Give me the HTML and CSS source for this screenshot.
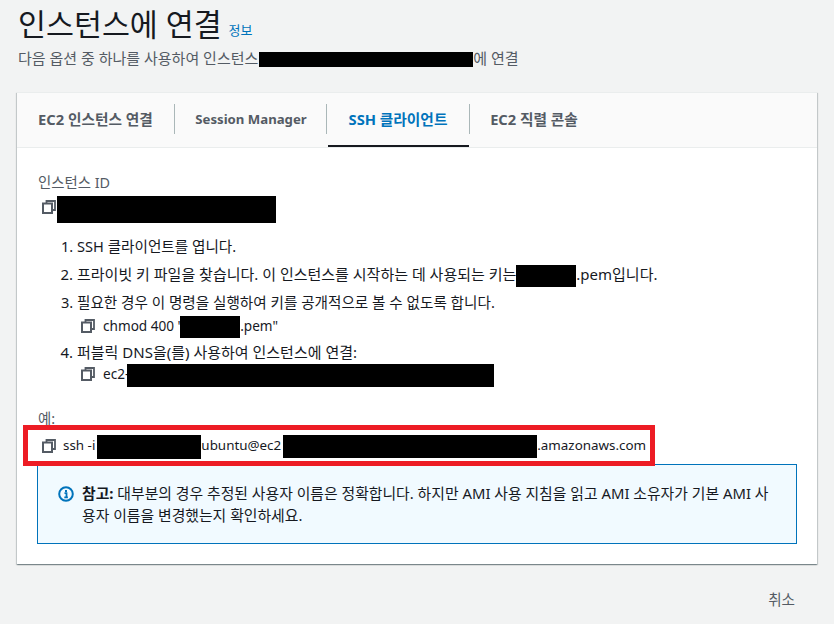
FILE: index.html
```html
<!DOCTYPE html>
<html lang="ko">

<head>
    <meta charset="utf-8">
    <title>인스턴스에 연결</title>
    <link rel="stylesheet" href="styles.css">
</head>

<body>
    <svg class="defs" width="0" height="0">
        <symbol id="copy" viewBox="0 0 14 14">
            <path d="M4.500 3.500V1h8.500v9H10" fill="none" stroke="#545b64" stroke-width="1.800"/>
            <rect x="1" y="3.500" width="9" height="9.500" fill="none" stroke="#545b64" stroke-width="2"/>
        </symbol>
    </svg>

    <header class="top">
        <h1>인스턴스에 연결 <a class="info" href="#">정보</a></h1>
        <p class="sub">다음 옵션 중 하나를 사용하여 인스턴스<span class="red r-sub"></span>에 연결</p>
    </header>

    <section class="card">
        <nav class="tabs">
            <a class="tab t1">EC2 인스턴스 연결</a>
            <a class="tab t2">Session Manager</a>
            <a class="tab t3 active">SSH 클라이언트</a>
            <a class="tab t4">EC2 직렬 콘솔</a>
        </nav>

        <div class="body">
            <div class="label">인스턴스 ID</div>
            <div class="copy id-row">
                <svg class="ico"><use href="#copy"/></svg><span class="red r-id"></span>
            </div>

            <ol class="steps">
                <li>SSH 클라이언트를 엽니다.</li>
                <li class="wide">프라이빗 키 파일을 찾습니다. 이 인스턴스를 시작하는 데 사용되는 키는<span class="red r-key"></span>.pem입니다.</li>
                <li class="has-cmd">필요한 경우 이 명령을 실행하여 키를 공개적으로 볼 수 없도록 합니다.
                    <div class="copy cmd cmd-chmod">
                        <svg class="ico"><use href="#copy"/></svg><span>chmod 400 "<span class="red r-chmod"></span>.pem"</span>
                    </div>
                </li>
                <li class="has-cmd wide">퍼블릭 DNS을(를) 사용하여 인스턴스에 연결:
                    <div class="copy cmd cmd-dns">
                        <svg class="ico"><use href="#copy"/></svg><span>ec2-<span class="red r-dns"></span></span>
                    </div>
                </li>
            </ol>

            <div class="label ex-label">예:</div>
            <div class="example">
                <svg class="ico"><use href="#copy"/></svg><span>ssh -i<span class="red r-pem"></span>ubuntu@ec2<span class="red r-host"></span>.amazonaws.com</span>
            </div>

            <div class="alert">
                <svg class="alert-ico" viewBox="0 0 16 16">
                    <circle cx="8" cy="8" r="6.800" fill="none" stroke="#0073bb" stroke-width="2"/>
                    <path d="M6.500 7.200h2v4M6.300 11.400h3.600" fill="none" stroke="#0073bb" stroke-width="1.800"/>
                    <rect x="7" y="4" width="2" height="2" fill="#0073bb"/>
                </svg>
                <p><b>참고:</b> 대부분의 경우 추정된 사용자 이름은 정확합니다. 하지만 AMI 사용 지침을 읽고 AMI 소유자가 기본 AMI 사용자 이름을 변경했는지 확인하세요.</p>
            </div>
        </div>
    </section>

    <div class="actions"><a class="cancel">취소</a></div>
</body>

</html>
```

FILE: styles.css
```css
html {
    font-family: "Noto Sans", "Noto Sans CJK KR", sans-serif;
    font-size: 14px;
    color: #16191f;
}

body {
    margin: 0;
    height: 624px;
    overflow: hidden;
    background-color: #f2f3f3;
    padding: 0 17px;
    box-sizing: border-box;
}

.defs {
    position: absolute;
}

.top {
    height: 92px;
}

h1 {
    margin: 0;
    padding-top: 5px;
    padding-left: 1px;
    font-size: 30.4px;
    line-height: 40px;
    font-weight: 400;
}

.info {
    font-size: 13px;
    color: #0073bb;
    text-decoration: none;
    vertical-align: 1px;
    margin-left: -1px;
}

.sub {
    margin: -3px 0 0 1px;
    line-height: 22px;
    color: #545b64;
    font-size: 15px;
}

.red {
    display: inline-block;
    background-color: #000;
    vertical-align: middle;
}

.r-sub {
    width: 214px;
    height: 15px;
    margin-left: 1px;
}

.r-id {
    width: 219px;
    height: 27px;
}

.r-key {
    width: 60px;
    height: 22px;
    margin: -4px 0;
}

.r-chmod {
    width: 60px;
    height: 22px;
    margin: -4px 0 -4px -3px;
}

.r-dns {
    width: 367px;
    height: 23px;
    margin: -4px 0 -4px -2px;
}

.r-pem {
    width: 104px;
    height: 24px;
    margin: -4px 0 -4px 2px;
}

.r-host {
    width: 254px;
    height: 23px;
    margin: -4px 0 -4px 2px;
}

.card {
    width: 800px;
    height: 472px;
    box-sizing: border-box;
    background-color: #fff;
    border-top: 1px solid #eaeded;
    box-shadow: 0 1px 1px 0 rgba(0, 28, 36, 0.3), 1px 1px 1px 0 rgba(0, 28, 36, 0.15), -1px 1px 1px 0 rgba(0, 28, 36, 0.15);
}

.tabs {
    display: flex;
    height: 43px;
    background-color: #fafafa;
    border-bottom: 1px solid #eaeded;
    padding-top: 11px;
}

.tab {
    height: 30px;
    line-height: 30px;
    font-weight: 700;
    font-size: 14.7px;
    color: #545b64;
    text-align: center;
    border-right: 1px solid #aab7b8;
    position: relative;
}

.t1 {
    width: 157px;
}

.t2 {
    width: 152px;
    font-size: 13.2px;
    padding-left: 1px;
    box-sizing: border-box;
}

.t3 {
    width: 142px;
}

.t4 {
    width: 128px;
    border-right: none;
}

.tab.active {
    color: #0073bb;
}

.tab.active::after {
    content: "";
    position: absolute;
    left: 1px;
    right: 0;
    top: 41px;
    height: 2px;
    background-color: #16191f;
}

.body {
    padding: 24px 20px 0;
}

.label {
    color: #545b64;
    line-height: 22px;
    font-size: 14.4px;
    margin-left: 1px;
}

.copy {
    display: flex;
    align-items: center;
}

.ico {
    width: 14px;
    height: 14px;
    flex: none;
    margin-right: 8px;
}

.id-row {
    height: 27px;
    margin-top: 2px;
    padding-left: 5px;
}

.id-row .ico {
    margin-right: 1px;
    align-self: flex-start;
    margin-top: 4px;
}

.steps {
    margin: 12px 0 0;
    padding: 0 0 0 40px;
    line-height: 22px;
    font-size: 14.6px;
}

.steps li {
    margin-bottom: 6px;
}

.steps li.has-cmd {
    margin-bottom: 3px;
}

.steps li.wide {
    font-size: 15px;
}

.cmd {
    height: 24px;
    padding-left: 4px;
    line-height: 24px;
    font-size: 13.6px;
}

.steps li.wide .cmd {
    font-size: 13.6px;
}

.cmd-chmod {
    margin-top: 1px;
}

.cmd-dns {
    margin-top: -1px;
}

.ex-label {
    margin-top: 22px;
    margin-bottom: -5px;
}

.example {
    display: flex;
    align-items: center;
    width: 632px;
    height: 41px;
    box-sizing: border-box;
    margin: 0 0 -2px -14px;
    padding-left: 14px;
    border: 5px solid #ed1c24;
    font-size: 13.4px;
    position: relative;
    z-index: 1;
}

.example .ico {
    margin-right: 7px;
}

.alert {
    display: flex;
    width: 760px;
    height: 80px;
    box-sizing: border-box;
    background-color: #f1faff;
    border: 1px solid #0073bb;
    padding: 17px 20px 0;
    line-height: 22px;
    font-size: 14.85px;
}

.alert-ico {
    width: 16px;
    height: 16px;
    flex: none;
    margin: 4px 8px 0 0;
}

.alert p {
    margin: 0;
}

.actions {
    text-align: right;
    padding: 24px 22px 0 0;
}

.cancel {
    font-weight: 400;
    font-size: 14.6px;
    color: #545b64;
}
```
